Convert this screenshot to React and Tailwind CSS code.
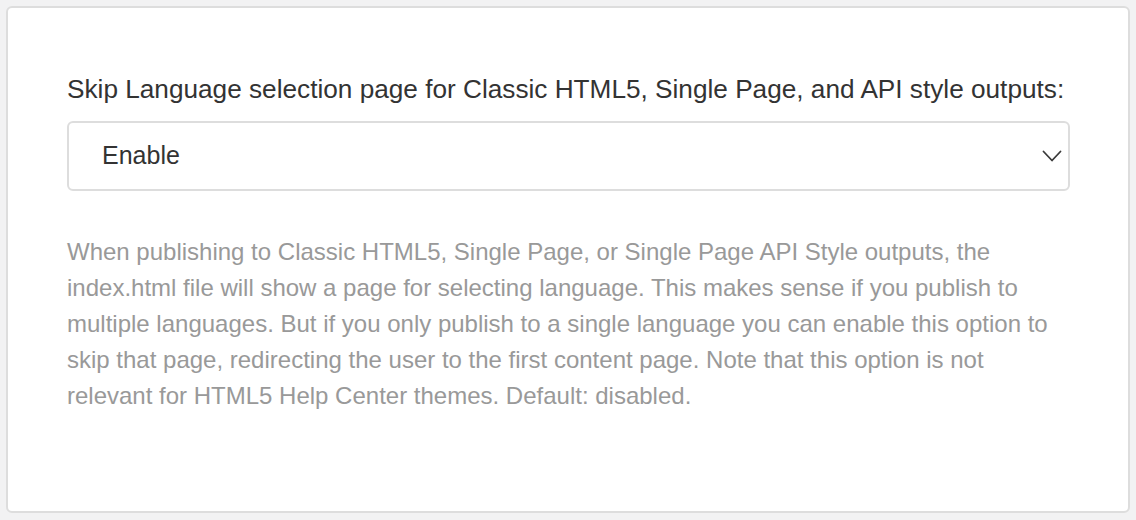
import React from 'react';

const App = () => {
    return (
        <div className="w-[1136px] h-[520px] bg-[#f2f2f3] pt-[6px] pl-[6px] pr-[6px]" style={{ fontFamily: '"Liberation Sans", Arial, sans-serif' }}>
            <div className="h-[507px] bg-white border-2 border-[#dddddd] rounded-[6px] pl-[59px] pr-[58px] pt-[65px]">
                <label className="block text-[26.2px] leading-[32px] text-[#333333]">
                    Skip Language selection page for Classic HTML5, Single Page, and API style outputs:
                </label>
                <div className="mt-[16px] h-[70px] border-2 border-[#dddddd] rounded-[6px] flex items-center justify-between pl-[33px] pr-[6px]">
                    <span className="text-[25px] text-[#333333]">Enable</span>
                    <svg width="20" height="12" viewBox="0 0 20 12" fill="none" stroke="#3a3a3a" strokeWidth="1.8" strokeLinecap="round" strokeLinejoin="round">
                        <path d="M1.5 1.5l8.5 9 8.5-9" />
                    </svg>
                </div>
                <p className="mt-[43px] text-[24px] leading-[36px] text-[#999999]">
                    When publishing to Classic HTML5, Single Page, or Single Page API Style outputs, the index.html file will show a page for selecting language. This makes sense if you publish to multiple languages. But if you only publish to a single language you can enable this option to skip that page, redirecting the user to the first content page. Note that this option is not relevant for HTML5 Help Center themes. Default: disabled.
                </p>
            </div>
        </div>
    );
};

export default App;
